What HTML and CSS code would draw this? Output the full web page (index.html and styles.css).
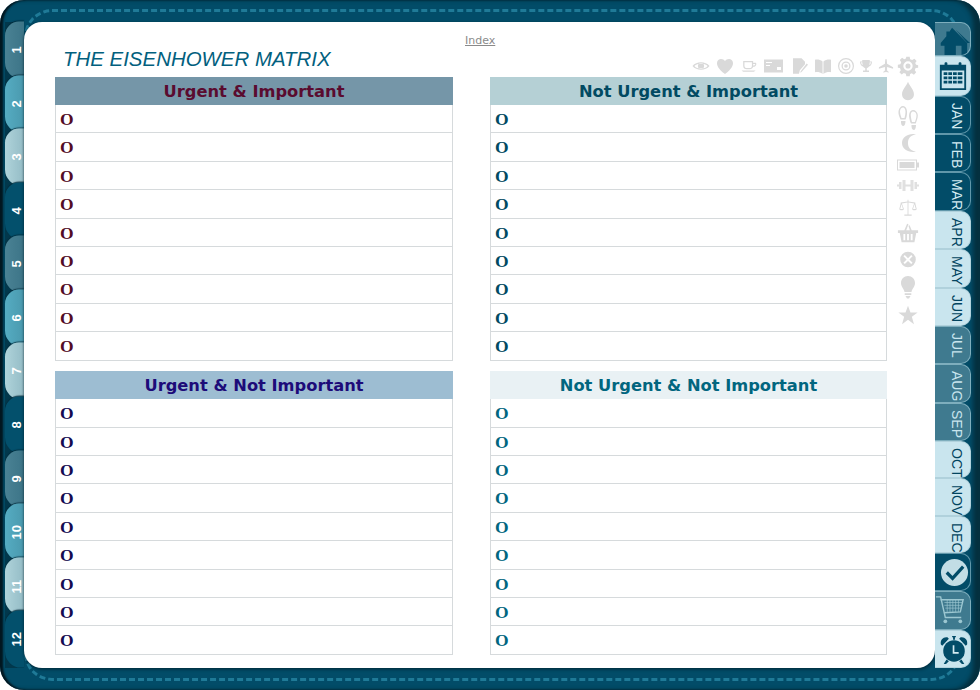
FILE: index.html
```html
<!DOCTYPE html>
<html lang="en">
<head>
<meta charset="utf-8">
<title>The Eisenhower Matrix</title>
<link rel="stylesheet" href="styles.css">
</head>
<body>
<div class="frame">
  <nav class="num-tabs">
    <a class="num t-a">1</a><a class="num t-b">2</a><a class="num t-c">3</a><a class="num t-d">4</a>
    <a class="num t-a">5</a><a class="num t-b">6</a><a class="num t-c">7</a><a class="num t-d">8</a>
    <a class="num t-a">9</a><a class="num t-b">10</a><a class="num t-c">11</a><a class="num t-d">12</a>
  </nav>
  <main class="page">
    <div class="index-link">Index</div>
    <h1 class="title">THE EISENHOWER MATRIX</h1>
    <div class="matrix">
      <section class="quad q1">
        <h2 class="head">Urgent &amp; Important</h2>
        <div class="row">O</div><div class="row">O</div><div class="row">O</div><div class="row">O</div><div class="row">O</div><div class="row">O</div><div class="row">O</div><div class="row">O</div><div class="row">O</div>
      </section>
      <section class="quad q2">
        <h2 class="head">Not Urgent &amp; Important</h2>
        <div class="row">O</div><div class="row">O</div><div class="row">O</div><div class="row">O</div><div class="row">O</div><div class="row">O</div><div class="row">O</div><div class="row">O</div><div class="row">O</div>
      </section>
      <section class="quad q3">
        <h2 class="head">Urgent &amp; Not Important</h2>
        <div class="row">O</div><div class="row">O</div><div class="row">O</div><div class="row">O</div><div class="row">O</div><div class="row">O</div><div class="row">O</div><div class="row">O</div><div class="row">O</div>
      </section>
      <section class="quad q4">
        <h2 class="head">Not Urgent &amp; Not Important</h2>
        <div class="row">O</div><div class="row">O</div><div class="row">O</div><div class="row">O</div><div class="row">O</div><div class="row">O</div><div class="row">O</div><div class="row">O</div><div class="row">O</div>
      </section>
    </div>
    <div class="tools">
      <div class="tools-top">
        <svg class="w24" viewBox="-3.500 -3.500 31 31"><path fill-rule="evenodd" d="M1 12C6 5.500 18 5.500 23 12 18 18.500 6 18.500 1 12ZM12 8a4 4 0 1 0 0 8 4 4 0 0 0 0-8ZM3.500 12C7 16.500 17 16.500 20.500 12 17 7.500 7 7.500 3.500 12Z"/><circle cx="12" cy="12" r="2"/></svg>
        <svg class="w24" viewBox="-1.500 -1.500 27 27"><path d="M12 21C4 15 3 11 3 8.500 3 5.500 5.500 4 7.500 4 9.500 4 11 5 12 6.500 13 5 14.500 4 16.500 4 18.500 4 21 5.500 21 8.500 21 11 20 15 12 21Z"/></svg>
        <svg class="w24" viewBox="-2.500 -2.500 29 29"><path fill-rule="evenodd" d="M5 6H17V8H20C21.500 8 21.500 13 17 13 16.500 15 15 16 13 16H9C7 16 5 14.500 5 12ZM6.500 7.500V12C6.500 13.500 8 14.500 9 14.500H13C14.500 14.500 15.500 13.500 15.500 12V7.500ZM17 9.500V11.500C19.500 11.500 19.800 9.500 19.500 9.500Z"/><path d="M3 17.500H20L18 19H5Z"/></svg>
        <svg class="w26" viewBox="0 0 26 24"><path fill-rule="evenodd" d="M3 5.500H22V18.500H3ZM5 8V9H11V8ZM5 11V12H9V11ZM16 13V16H20V13Z"/></svg>
        <svg class="w24" viewBox="-2 -2 28 28"><path d="M5 3H15L19 7V10L13 17 12 21H5Z"/><path d="M14 18L21 9 22.500 10.500 15 19 13.500 20Z"/></svg>
        <svg class="w24" viewBox="-1.500 -1.500 27 27"><path d="M3 5C6 4.500 9 5 11.500 7V21C9 19 6 18.500 3 19ZM21 5C18 4.500 15 5 12.500 7V21C15 19 18 18.500 21 19Z"/></svg>
        <svg class="w22" viewBox="0 0 22 24"><path fill-rule="evenodd" d="M11 4a8 8 0 1 0 0 16 8 8 0 0 0 0-16ZM11 5.200a6.800 6.800 0 1 1 0 13.600 6.800 6.800 0 0 1 0-13.600ZM11 7.500a4.500 4.500 0 1 0 0 9 4.500 4.500 0 0 0 0-9ZM11 8.800a3.200 3.200 0 1 1 0 6.400 3.200 3.200 0 0 1 0-6.400Z"/><circle cx="11" cy="12" r="1.800"/></svg>
        <svg class="w18" viewBox="-3 -4 24 32"><path fill-rule="evenodd" d="M4 4H14V6H17C17 10 15 12 13 12.500 12 14 10.500 14.500 10 15V18H13V20H5V18H8V15C7.500 14.500 6 14 5 12.500 3 12 1 10 1 6H4ZM2.500 7C2.700 9 3.500 10.500 4.500 11L4 7ZM15.500 7H14L13.500 11C14.500 10.500 15.300 9 15.500 7Z"/></svg>
        <svg class="w22" viewBox="-4.500 -4.700 31 33.800"><path d="M10 3C10.500 2 11.500 2 12 3L12.500 9 21 14V16L12.500 13.500V18.500L15 20.500V21.500L11 20.500 7 21.500V20.500L9.500 18.500V13.500L1 16V14L9.500 9Z"/></svg>
        <svg class="gear" viewBox="-1 -1 26 26"><path fill-rule="evenodd" d="M10 1H14L14.500 4 17 5 19.500 3.300 22.200 6 20.500 8.500 21.500 10.500 24 11V14L21 14.500 20 17 21.700 19.500 19 22.200 16.500 20.500 14.500 21.500 14 24H10L9.500 21.200 7 20.200 4.500 22 1.800 19.300 3.500 17 2.500 14.500 0 14V10.500L3 10 4 7.500 2.300 5 5 2.300 7.500 4 9.500 3ZM12 6.500a5.500 5.500 0 1 0 0 11 5.500 5.500 0 0 0 0-11ZM12 9a3 3 0 1 1 0 6 3 3 0 0 1 0-6Z"/></svg>
      </div>
      <div class="tools-side">
        <svg class="s-drop" viewBox="-1 -1.200 24 28.400"><path d="M11 3C13 8 17.500 11.500 17.500 16.500 17.500 20.500 14.500 23 11 23 7.500 23 4.500 20.500 4.500 16.500 4.500 11.500 9 8 11 3Z"/></svg>
        <svg class="s-feet" viewBox="0 0 22 27"><path fill-rule="evenodd" d="M6 2C9 2 10.500 6 10 10 9.700 12 9.500 14 8.500 15.500H3.500C2.500 13 1 10 1.500 7 2 4 4 2 6 2ZM6 3.500C4.500 3.500 3 5 3 7.500 3 10 4 12 4.500 14H7.500C8 12 8.500 10 8.500 8 8.500 5 7.500 3.500 6 3.500ZM4 17H8.500C8.500 20 7.500 22 6 22 4.500 22 3.800 19.500 4 17Z"/><path fill-rule="evenodd" d="M16 6C18.500 6 20.500 8 20.800 11 21 14 19.500 17 18.800 19.500H14C13 18 12.800 16 12.300 14 11.500 10 13 6 16 6ZM16 7.500C14.500 7.500 13.500 9 13.800 12 14 14 14.500 16 15 18H18C18.500 16 19.500 14 19.500 11.500 19.500 9 18 7.500 16 7.500ZM14.500 21H19C19 24 18 26 16.800 26 15 26 14.300 23.500 14.500 21Z"/></svg>
        <svg class="s-moon" viewBox="0 0 22 24"><path d="M16 3C10 3 5 6.500 5 12 5 17.500 10 21 16 21 18 21 19 20.500 19 20.500 13.500 20 11 16.500 11 12 11 7.500 13.500 4 19 3.500 19 3.500 18 3 16 3Z"/></svg>
        <svg class="s-batt" viewBox="0 0 22 20"><path fill-rule="evenodd" d="M0 4.500H20V7.500H22V12.500H20V15.500H0ZM1 5.500V14.500H19V5.500Z"/><rect x="2.500" y="7" width="15" height="6"/></svg>
        <svg class="s-bell" viewBox="0 0 22 21"><path d="M0 9.500H2V7H4.500V14H2V11.500H0ZM5.500 5H8.500V9.500H13.500V5H16.500V16H13.500V11.500H8.500V16H5.500ZM17.500 7H20V9.500H22V11.500H20V14H17.500Z"/></svg>
        <svg class="s-scale" viewBox="0 0 24 24"><path fill-rule="evenodd" d="M11.500 3H12.500V5L20 6V7L21.500 13C21.500 15 16.500 15 16.500 13L18.700 7 12.500 6V19H16V20.500H8V19H11.500V6L5.300 7 7.500 13C7.500 15 2.500 15 2.500 13L4 7V6L11.500 5ZM5 8 3.500 13H6.500ZM19 8 17.500 13H20.500Z"/></svg>
        <svg class="s-bask" viewBox="0 0 24 26"><path fill-rule="evenodd" d="M11 3 12.500 3.500 10 10H14L12.500 5 13.800 4.500 16 10H23V13H21L19 23H5L3 13H1V10H8ZM7 14V21H9V14ZM11 14V21H13V14ZM15 14V21H17V14Z"/></svg>
        <svg class="s-x" viewBox="0 0 24 24"><path fill-rule="evenodd" d="M12 3.500a8.500 8.500 0 1 0 0 17 8.500 8.500 0 0 0 0-17ZM8.500 7 12 10.500 15.500 7 17 8.500 13.500 12 17 15.500 15.500 17 12 13.500 8.500 17 7 15.500 10.500 12 7 8.500Z"/></svg>
        <svg class="s-bulb" viewBox="0 0 22 28"><path d="M11 3C15 3 18 6 18 10 18 14 15 15.500 14.500 19H7.500C7 15.500 4 14 4 10 4 6 7 3 11 3ZM7.700 20.200H14.300V22H7.700ZM8.500 23H13.500L12 25.500H10Z"/></svg>
        <svg class="s-star" viewBox="0 0 24 24"><path d="M12 2L14.700 9.300H22.500L16.200 14 18.500 22 12 17.200 5.500 22 7.800 14 1.500 9.300H9.300Z"/></svg>
      </div>
    </div>
  </main>
  <nav class="rail">
    <a class="tab mid home"><svg class="ic-home" viewBox="0 0 36 30"><path d="M17 1L33 17V30H27V20H21V30H9V20H5V17L11 10V5H14V5.500Z"/><path d="M21 3L36 17H33Z"/></svg></a>
    <a class="tab light cal"><svg class="ic-cal" viewBox="0 0 32 32"><path fill-rule="evenodd" d="M2 4H7V2.500C7 1 10 1 10 2.500V4H22V2.500C22 1 25 1 25 2.500V4H30V31H2ZM4 10V29H28V10Z"/><path d="M6 12H10V15H6ZM11 12H15V15H11ZM16 12H20V15H16ZM21 12H26V15H21ZM6 16.500H10V19.500H6ZM11 16.500H15V19.500H11ZM16 16.500H20V19.500H16ZM21 16.500H26V19.500H21ZM6 21H10V24H6ZM11 21H15V24H11ZM16 21H20V24H16ZM21 21H26V24H21Z"/></svg></a>
    <a class="tab dark m">JAN</a>
    <a class="tab dark m">FEB</a>
    <a class="tab dark m">MAR</a>
    <a class="tab light m">APR</a>
    <a class="tab light m">MAY</a>
    <a class="tab light m">JUN</a>
    <a class="tab mid m">JUL</a>
    <a class="tab mid m">AUG</a>
    <a class="tab mid m">SEP</a>
    <a class="tab light m short">OCT</a>
    <a class="tab light m short">NOV</a>
    <a class="tab light m short">DEC</a>
    <a class="tab dark check"><svg class="ic-check" viewBox="0 0 30 30"><circle cx="15" cy="15" r="14" fill="#c2dde5"/><path d="M7 15L13 21 24 9" fill="none" stroke="#024c68" stroke-width="3.400"/></svg></a>
    <a class="tab mid cart"><svg class="ic-cart" viewBox="0 0 32 32"><path d="M1 2H6L11 24H28" fill="none" stroke="#9cc7d1" stroke-width="1.500"/><path d="M6 5H30L27 18 9.500 19" fill="none" stroke="#9cc7d1" stroke-width="1.500"/><path d="M10 8H29M10 11H28M11 14H28M13 5V18M16 5V18M19 5V18M22 5V18M25 5V18" fill="none" stroke="#9cc7d1" stroke-width=".7"/><circle cx="11" cy="28" r="2" fill="#9cc7d1"/><circle cx="27" cy="28" r="2" fill="#9cc7d1"/></svg></a>
    <a class="tab light alarm"><svg class="ic-alarm" viewBox="0 0 32 34"><path d="M2 11C1 6 5 2.500 9 3.500L10.500 5 3.500 12.500ZM30 11C31 6 27 2.500 23 3.500L21.500 5 28.500 12.500ZM14 2H18V3.500H17V6H15V3.500H14Z"/><circle cx="16" cy="18" r="11.500"/><path d="M8 27L5 32H7.500L10.500 29ZM24 27L27 32H24.500L21.500 29Z"/><path d="M15.500 12V20H21" fill="none" stroke="#d3eaf1" stroke-width="1.800"/></svg></a>
  </nav>
</div>
</body>
</html>
```

FILE: styles.css
```css
* { box-sizing: border-box; }
html, body { margin: 0; padding: 0; background: #fff; }
body { width: 980px; height: 690px; overflow: hidden; }

.frame {
  position: relative;
  width: 980px;
  height: 690px;
  display: flex;
  padding: 22px 9px 22px 5px;
  background: #024c68;
  border-radius: 24px;
  box-shadow: inset 3px 0 2px #02161f, inset -7px 0 4px #04303f;
  overflow: hidden;
}
.frame::before {
  content: "";
  position: absolute;
  inset: 9px 20px 9px 24px;
  border: 3px dashed #1f7a97;
  border-radius: 28px;
}

.num-tabs {
  position: relative;
  width: 19px;
  display: flex;
  flex-direction: column;
  background: #02384c;
}
.num {
  flex: 1 1 0;
  margin-top: -3px;
  display: flex;
  align-items: center;
  justify-content: center;
  padding-right: 3px;
  color: #fff;
  font: bold 13px "Liberation Sans", sans-serif;
  writing-mode: vertical-rl;
  rotate: 180deg;
  border-radius: 0 16px 14px 0;
  box-shadow: 0 1px 1px rgba(0, 40, 55, .8);
}
.num:first-child { margin-top: 0; }
.t-a { background: linear-gradient(270deg, #4a8294, #3c7487); }
.t-b { background: linear-gradient(270deg, #55acc2, #4a99ae); }
.t-c { background: linear-gradient(270deg, #afd3da, #94bcc6); }
.t-d { background: #03506c; }

.page {
  position: relative;
  width: 911px;
  background: #fff;
  border-radius: 18px;
  padding: 0 0 0 31px;
  box-shadow: 1px 2px 3px rgba(0, 0, 0, .3), -1px 0 2px rgba(0, 30, 40, .35);
}
.index-link {
  position: absolute;
  top: 12px;
  left: 441px;
  font: 11px "DejaVu Sans", sans-serif;
  color: #8a8a8a;
  text-decoration: underline;
}
.title {
  margin: 0;
  height: 55px;
  padding: 25px 0 0 8px;
  font: italic normal 20.450px/24px "Liberation Sans", sans-serif;
  color: #02607e;
}

.matrix {
  display: grid;
  grid-template-columns: 398px 397px;
  column-gap: 37px;
  row-gap: 10.800px;
}
.head {
  margin: 0;
  height: 28px;
  text-align: center;
  font: bold 16.300px/30px "DejaVu Sans", sans-serif;
}
.row {
  height: 28.400px;
  padding: 0 0 0 4px;
  border: 1px solid #d6dadc;
  border-top: 0;
  font: bold 17.500px/29px "Liberation Serif", serif;
}
.q1 .head { background: #7596a8; color: #5a0b2f; }
.q1 .row { color: #520c26; }
.q2 .head { background: #b5d0d5; color: #014a62; }
.q2 .row { color: #014a62; }
.q3 .head { background: #9dbdd2; color: #1d0b79; }
.q3 .row { color: #140b52; }
.q4 .head { background: #e9f1f4; color: #01667f; }
.q4 .row { color: #01667f; }

.tools {
  position: absolute;
  top: 31px;
  right: 16px;
  display: flex;
  flex-direction: column;
  align-items: flex-end;
  fill: #d9d9d9;
}
.tools svg { display: block; }
.tools-top { display: flex; align-items: center; height: 25px; }
.w18 { width: 18px; height: 24px; }
.w22 { width: 22px; height: 24px; }
.w24 { width: 24px; height: 24px; }
.w26 { width: 26px; height: 24px; }
.gear { width: 22px; height: 22px; }
.tools-side { width: 22px; }
.s-drop { width: 22px; height: 26px; }
.s-feet { width: 22px; height: 27px; }
.s-moon { width: 22px; height: 24px; }
.s-batt { width: 22px; height: 20px; }
.s-bell { width: 22px; height: 21px; opacity: .8; }
.s-scale { width: 22px; height: 24px; }
.s-bask { width: 22px; height: 26px; }
.s-x { width: 22px; height: 27px; }
.s-bulb { width: 22px; height: 28px; }
.s-star { width: 22px; height: 28px; }

.rail {
  position: relative;
  width: 36px;
  display: flex;
  flex-direction: column;
}
.tab {
  display: flex;
  align-items: center;
  justify-content: center;
  border-radius: 0 10px 10px 0;
  border: 1px solid rgba(190, 225, 235, .5);
  border-left: 0;
  height: 38.500px;
}
.m {
  writing-mode: vertical-rl;
  justify-content: flex-start;
  padding: 6px 0 0 8px;
  font: 14px/1 "Liberation Sans", sans-serif;
}
.short { height: 37.300px; }
.dark { background: #024c68; color: #d4ebf2; }
.light { background: #c9e5ee; color: #02445e; border-color: rgba(2, 70, 95, .12); }
.mid { background: #3f7a8f; color: #c9e5ee; }
.home { height: 34px; overflow: hidden; }
.cal { height: 40px; }
.check { padding-left: 4px; }
.cart { padding-right: 5px; }
.alarm { padding: 3px 0 0 3px; }
.ic-home { width: 34px; height: 30px; fill: #024c68; margin-top: 4px; }
.ic-cal { width: 30px; height: 32px; fill: #024c68; }
.ic-check { width: 29px; height: 29px; }
.ic-cart { width: 30px; height: 30px; }
.ic-alarm { width: 30px; height: 32px; fill: #024c68; }
```
